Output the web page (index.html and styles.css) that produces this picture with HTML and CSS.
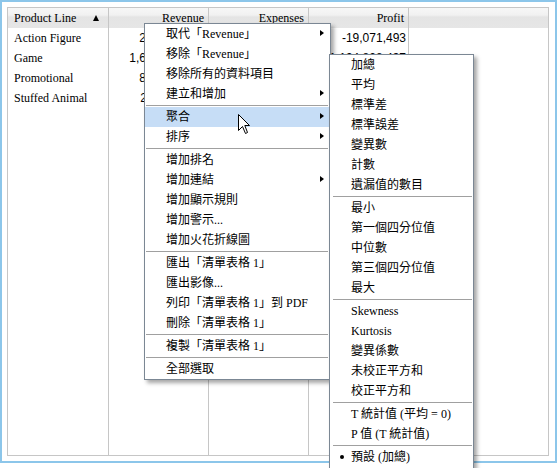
FILE: index.html
```html
<!DOCTYPE html>
<html>
<head>
<meta charset="utf-8">
<link rel="stylesheet" href="styles.css">
</head>
<body>
<div class="frame">
  <div class="table">
    <div class="col c1">
      <div class="head left"><span>Product Line</span><span class="sort"></span></div>
      <div class="cell">Action Figure</div>
      <div class="cell">Game</div>
      <div class="cell">Promotional</div>
      <div class="cell">Stuffed Animal</div>
    </div>
    <div class="col">
      <div class="head">Revenue</div>
      <div class="cell num">221,346,129</div>
      <div class="cell num">1,634,239,120</div>
      <div class="cell num">823,445,100</div>
      <div class="cell num">254,116,200</div>
    </div>
    <div class="col">
      <div class="head">Expenses</div>
    </div>
    <div class="col">
      <div class="head">Profit</div>
      <div class="cell num">-19,071,493</div>
      <div class="cell num">1,194,828,437</div>
    </div>
    <div class="col last">
      <div class="head"></div>
    </div>
  </div>
</div>

<div class="menu main">
  <div class="item sub">取代「Revenue」</div>
  <div class="item">移除「Revenue」</div>
  <div class="item">移除所有的資料項目</div>
  <div class="item sub">建立和增加</div>
  <div class="sep"></div>
  <div class="item sub hot">聚合</div>
  <div class="item sub">排序</div>
  <div class="sep"></div>
  <div class="item">增加排名</div>
  <div class="item sub">增加連結</div>
  <div class="item">增加顯示規則</div>
  <div class="item">增加警示...</div>
  <div class="item">增加火花折線圖</div>
  <div class="sep"></div>
  <div class="item">匯出「清單表格 1」</div>
  <div class="item">匯出影像...</div>
  <div class="item">列印「清單表格 1」到 PDF</div>
  <div class="item">刪除「清單表格 1」</div>
  <div class="sep"></div>
  <div class="item">複製「清單表格 1」</div>
  <div class="sep"></div>
  <div class="item">全部選取</div>
</div>

<div class="menu submenu">
  <div class="item">加總</div>
  <div class="item">平均</div>
  <div class="item">標準差</div>
  <div class="item">標準誤差</div>
  <div class="item">變異數</div>
  <div class="item">計數</div>
  <div class="item">遺漏值的數目</div>
  <div class="sep"></div>
  <div class="item">最小</div>
  <div class="item">第一個四分位值</div>
  <div class="item">中位數</div>
  <div class="item">第三個四分位值</div>
  <div class="item">最大</div>
  <div class="sep"></div>
  <div class="item">Skewness</div>
  <div class="item">Kurtosis</div>
  <div class="item">變異係數</div>
  <div class="item">未校正平方和</div>
  <div class="item">校正平方和</div>
  <div class="sep"></div>
  <div class="item">T 統計值 (平均 = 0)</div>
  <div class="item">P 值 (T 統計值)</div>
  <div class="sep"></div>
  <div class="item checked">預設 (加總)</div>
</div>

<svg class="cursor" width="13" height="21" viewBox="0 0 13 21">
  <path d="M0.5 0.5 L0.5 16.5 L4.5 12.5 L7.5 19.5 L9.5 18.5 L6.8 11.5 L11.5 11.5 Z" fill="#fff" stroke="#000" stroke-width="1" stroke-linejoin="miter"/>
</svg>
</body>
</html>
```

FILE: styles.css
```css
html, body {
  margin: 0;
  padding: 0;
  background: #fff;
}
body {
  position: relative;
  width: 557px;
  height: 468px;
  overflow: hidden;
  font-family: "Liberation Serif", "Noto Sans CJK TC", serif;
  font-size: 12px;
  color: #000;
}
.frame {
  box-sizing: border-box;
  width: 557px;
  height: 463px;
  border: 2px solid #8cc6ea;
  padding: 5px 6px 5px 5px;
}
.table {
  box-sizing: border-box;
  height: 449px;
  border: 1px solid #c6c6c6;
  display: flex;
}
.col {
  box-sizing: border-box;
  width: 100px;
  border-right: 1px solid #c6c6c6;
  display: flex;
  flex-direction: column;
}
.col.c1 { width: 101px; }
.col.last { flex: 1; border-right: none; }
.head {
  height: 20px;
  line-height: 20px;
  background: linear-gradient(#f7f7f7 0%, #f1f1f1 35%, #e4e4e4 45%, #e6e6e6 100%);
  text-align: right;
  padding: 0 4px 0 6px;
  white-space: nowrap;
}
.head.left {
  display: flex;
  justify-content: space-between;
  align-items: center;
  text-align: left;
  padding-right: 9px;
}
.sort {
  width: 0;
  height: 0;
  border-left: 3.5px solid transparent;
  border-right: 3.5px solid transparent;
  border-bottom: 6px solid #000;
}
.cell {
  height: 20px;
  line-height: 20px;
  padding: 0 4px 0 6px;
  white-space: nowrap;
}
.cell.num {
  text-align: right;
  font-family: "Liberation Sans", sans-serif;
  padding-right: 2px;
}
.menu {
  position: absolute;
  box-sizing: border-box;
  background: #fff;
  border: 1px solid #7b8794;
  box-shadow: 3px 3px 4px rgba(0, 0, 0, 0.35);
}
.main {
  left: 144px;
  top: 23px;
  width: 187px;
}
.submenu {
  left: 329px;
  top: 54px;
  width: 145px;
  height: 430px;
}
.item {
  position: relative;
  height: 20px;
  line-height: 20px;
  padding-left: 21px;
  white-space: nowrap;
}
.item.hot { background: #c6ddf6; }
.item.sub::after {
  content: "";
  position: absolute;
  right: 6px;
  top: 6px;
  width: 0;
  height: 0;
  border-left: 4px solid #000;
  border-top: 3.5px solid transparent;
  border-bottom: 3.5px solid transparent;
}
.item.checked::before {
  content: "";
  position: absolute;
  left: 10px;
  top: 8px;
  width: 4px;
  height: 4px;
  border-radius: 50%;
  background: #000;
}
.sep {
  height: 3px;
  margin: 0 2px 0 1px;
  position: relative;
}
.sep::before {
  content: "";
  position: absolute;
  left: 0;
  right: 0;
  top: 1px;
  height: 1px;
  background: #a0a0a0;
}
.submenu .sep { margin: 0 1px 0 3px; }
.cursor {
  position: absolute;
  left: 238px;
  top: 114px;
}
```
